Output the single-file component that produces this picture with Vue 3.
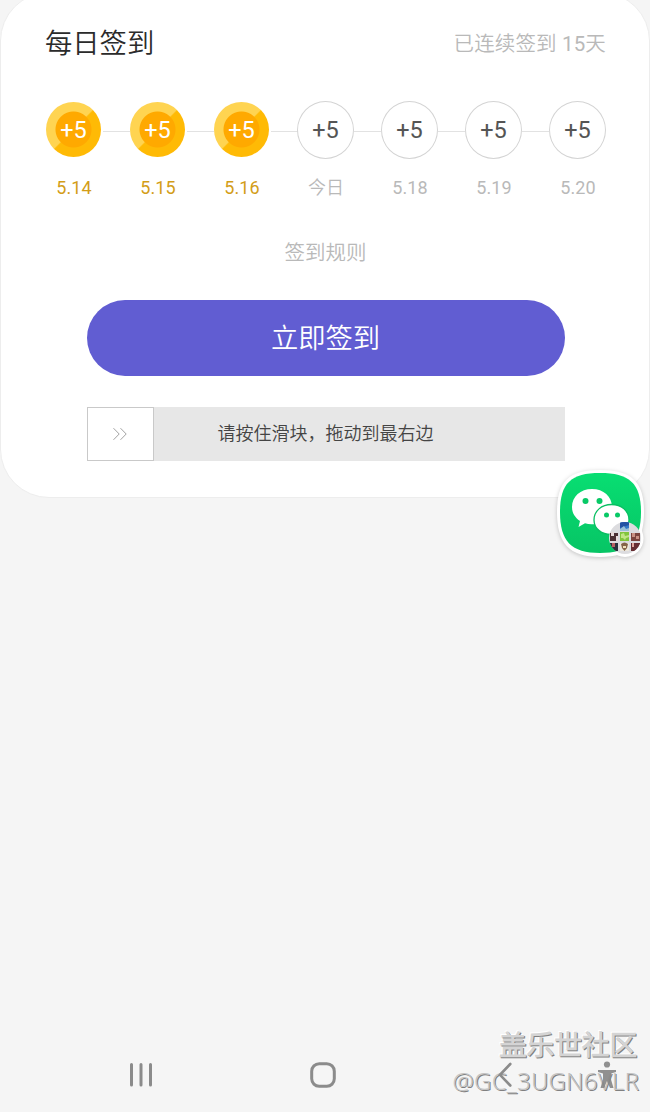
<template>
  <div class="page">
    <section class="card">
      <header class="card-header">
        <h2>每日签到</h2>
        <span class="streak">已连续签到 15天</span>
      </header>

      <ul class="days">
        <li v-for="day in days" :key="day.label" class="day" :class="{ done: day.done }">
          <div class="coin"><span>+{{ day.points }}</span></div>
          <span class="day-label">{{ day.label }}</span>
        </li>
      </ul>

      <a class="rules">签到规则</a>
      <button class="sign-btn" @click="verifying = true">立即签到</button>

      <div v-if="verifying" class="slider">
        <div class="handle">
          <svg width="16" height="14" viewBox="0 0 16 14" fill="none" stroke="#a2a2a2" stroke-width="1">
            <path d="M1.5 1.2 7.2 7 1.5 12.8M8.500 1.2 14.200 7 8.500 12.8" />
          </svg>
        </div>
        <span class="slider-text">请按住滑块，拖动到最右边</span>
      </div>
    </section>

    <!-- 悬浮应用图标 -->
    <div class="float-app">
      <svg width="94" height="94" viewBox="0 0 94 94">
        <defs>
          <linearGradient id="green" x1="0" y1="0" x2="0" y2="1">
            <stop offset="0" stop-color="#08de72" />
            <stop offset="1" stop-color="#07c565" />
          </linearGradient>
          <clipPath id="avatar"><circle cx="73" cy="72" r="16" /></clipPath>
        </defs>
        <path d="M48 4C79 4 92 15 92 46S79 91 48 91 5 77 5 46 17 4 48 4Z" fill="#fff" />
        <circle cx="73" cy="72.500" r="18.500" fill="#fff" />
        <path d="M48 7C77 7 89 17 89 46S77 87 48 87 8 75 8 46 19 7 48 7Z" fill="url(#green)" />
        <path d="M40 23C28.500 23 20 30.500 20 41C20 47 23 51.500 28 55L26.500 61L33 57.300C36 58.300 40 58.500 43 58C54 57 60 50 60 41C60 30.500 51.500 23 40 23Z" fill="#fff" />
        <circle cx="33.500" cy="35" r="3" fill="#08c966" />
        <circle cx="47.500" cy="35" r="3" fill="#08c966" />
        <path d="M59.500 38.500C49.500 38.500 42 45 42 54C42 63 50 68.500 59 68.500C62 68.500 64 68 66 67.500L72 70.500L71 65.500C75 62.500 77 58.500 77 54C77 45 69.500 38.500 59.500 38.500Z" fill="#fff" stroke="#09bf62" stroke-width="1.300" />
        <circle cx="54.500" cy="49" r="2.500" fill="#08c966" />
        <circle cx="65.500" cy="49" r="2.500" fill="#08c966" />
        <circle cx="73" cy="72" r="16" fill="#dcdcdf" />
        <!-- 九宫格群头像 -->
        <g clip-path="url(#avatar)">
          <rect x="68" y="56" width="9" height="9" fill="#3478c8" />
          <path d="M68 56h9v3l-9 3z" fill="#2451a4" />
          <path d="M68 65v-2l4-3 2 3 3-1v3z" fill="#9abfd6" />
          <rect x="58" y="67" width="8" height="8" fill="#4c3034" />
          <path d="M59 66h3v4h-3zM64 70h2v5h-2z" fill="#e8dada" />
          <rect x="68" y="66" width="9" height="9" fill="#82c53b" />
          <path d="M69 68l3-1 1 3 4-1v2l-3 1-1 2-2-2-2 0z" fill="#c2e584" />
          <rect x="79" y="67" width="9" height="8" fill="#7c443e" />
          <path d="M80 67h3v4h-3zM84 70h3v3h-3z" fill="#c99083" />
          <rect x="58" y="77" width="8" height="8" fill="#28313d" />
          <path d="M60 77h3v4h-3z" fill="#b96063" />
          <rect x="68" y="77" width="9" height="8" fill="#ece7dc" />
          <path d="M69 78q3.500-3 7 0l-1 4-2.500 3-2.500-3z" fill="#846448" />
          <path d="M71 80h3v2h-3z" fill="#f1e0bb" />
          <rect x="79" y="77" width="9" height="8" fill="#672d32" />
          <path d="M80 77h2v4h-2z" fill="#e1a79e" />
        </g>
      </svg>
    </div>

    <div class="watermark">
      <div class="wm-site">盖乐世社区</div>
      <div class="wm-user">@GC_3UGN6VLR</div>
    </div>

    <nav class="nav-bar">
      <svg width="24" height="26" viewBox="0 0 24 26" stroke="#8b8b8b" stroke-width="3" stroke-linecap="round">
        <path d="M2.500 2.500v20.500M12 2.500v20.500M21.500 2.500v20.500" />
      </svg>
      <svg width="26" height="26" viewBox="0 0 26 26" fill="none" stroke="#8b8b8b" stroke-width="3">
        <rect x="1.700" y="1.700" width="22.600" height="22.600" rx="7.500" />
      </svg>
      <svg width="14" height="26" viewBox="0 0 14 26" fill="none" stroke="#8b8b8b" stroke-width="2.600" stroke-linecap="round">
        <path d="M12.300 2 2 12.800 12.300 23.500" />
      </svg>
      <svg width="20" height="28" viewBox="0 0 20 28" fill="#858585" fill-opacity="0.9">
        <circle cx="10" cy="3.500" r="3.100" />
        <path d="M1 9h18v2l-5 1.500v6L16.500 27H13l-3-7-3 7H3.500L6 18.500v-6L1 11z" />
      </svg>
    </nav>
  </div>
</template>

<script setup>
import { ref } from 'vue'

const verifying = ref(true)

const days = ref([
  { label: '5.14', points: 5, done: true },
  { label: '5.15', points: 5, done: true },
  { label: '5.16', points: 5, done: true },
  { label: '今日', points: 5, done: false },
  { label: '5.18', points: 5, done: false },
  { label: '5.19', points: 5, done: false },
  { label: '5.20', points: 5, done: false },
])
</script>

<style>
body {
  margin: 0;
  background: #f5f5f5;
}
</style>

<style scoped>
.page {
  position: relative;
  display: flex;
  flex-direction: column;
  height: 1112px;
  overflow: hidden;
  background: #f5f5f5;
  font-family: Roboto, 'Noto Sans CJK SC DemiLight', 'Noto Sans CJK SC', sans-serif;
}

.card {
  box-sizing: border-box;
  display: flex;
  flex-direction: column;
  align-items: center;
  height: 506px;
  margin: -8px 0 0;
  padding: 30px 43px 0 44px;
  border: 1px solid #ededed;
  border-radius: 49px;
  background: #fff;
}

.card-header {
  display: flex;
  justify-content: space-between;
  align-items: flex-start;
  width: 100%;
  height: 40px;
}

h2 {
  margin: 1px 0 0;
  color: #2b2b2b;
  font-size: 27.3px;
  font-weight: 350;
  line-height: 40px;
}

.streak {
  color: #b9b9b9;
  font-size: 20.5px;
  line-height: 42px;
  letter-spacing: 0.15px;
}

.days {
  display: flex;
  justify-content: space-between;
  width: 561px;
  margin: 38px 0 0;
  padding: 0;
  list-style: none;
}

.day {
  display: flex;
  flex-direction: column;
  align-items: center;
  width: 57px;
}

.coin {
  position: relative;
  box-sizing: border-box;
  display: flex;
  align-items: center;
  justify-content: center;
  width: 57px;
  height: 58px;
  border: 1px solid #d4d4d4;
  border-radius: 50%;
  color: #555;
  font-size: 23.5px;
}

/* 与下一天的连接线 */
.day:not(:last-child) .coin::after {
  content: '';
  position: absolute;
  top: 29px;
  left: 56px;
  width: 27px;
  height: 1px;
  background: #e2e2e2;
}

.done .coin {
  width: 55px;
  height: 55px;
  margin: 1px 0 2px;
  border: none;
  background:
    radial-gradient(circle, #ffa900 17.500px, transparent 18.500px),
    linear-gradient(135deg, #ffd451 0 49%, #ffba05 51%);
  color: #fff;
}

.day.done .coin::after {
  left: 57px;
}

.day-label {
  height: 24px;
  margin-top: 17px;
  padding-left: 1px;
  color: #b9b9b9;
  font-size: 18px;
  line-height: 24px;
  letter-spacing: 0.1px;
}

.done .day-label {
  color: #d39d18;
}

.rules {
  margin-top: 38px;
  color: #b9b9b9;
  font-size: 20.5px;
  font-weight: 350;
  line-height: 30px;
}

.sign-btn {
  width: 478px;
  height: 76px;
  margin-top: 32px;
  padding: 0 0 5px;
  border: none;
  border-radius: 38px;
  background: #615dd2;
  color: #fff;
  font-family: inherit;
  font-size: 27.3px;
  font-weight: 350;
}

.slider {
  display: flex;
  width: 478px;
  height: 54px;
  margin-top: 31px;
  background: #e7e7e7;
}

.handle {
  box-sizing: border-box;
  display: flex;
  align-items: center;
  justify-content: center;
  width: 67px;
  border: 1px solid #c9c9c9;
  background: #fff;
}

.slider-text {
  margin-left: 64px;
  color: #444;
  font-size: 18px;
  font-weight: 350;
  line-height: 54px;
}

.float-app {
  position: absolute;
  top: 466px;
  left: 552px;
  filter: drop-shadow(0 1px 2px rgba(0, 0, 0, 0.2));
}

.nav-bar {
  position: relative;
  display: flex;
  align-items: center;
  height: 28px;
  margin: auto 0 23px;
  padding: 0 33px 0 129px;
}

.nav-bar svg:nth-child(2) {
  margin-left: 157px;
}

.nav-bar svg:nth-child(3) {
  margin-left: 162px;
}

.nav-bar svg:nth-child(4) {
  margin-left: 85px;
}

.watermark {
  position: absolute;
  right: 11px;
  bottom: 13px;
  display: flex;
  flex-direction: column;
  align-items: flex-end;
}

.wm-site {
  margin-right: 2px;
  color: #d4d4d4;
  font-size: 27.6px;
  font-weight: 700;
  line-height: 35px;
  text-shadow: 1px 1px 0 #808080, -1px -1px 0 #fff;
}

.wm-user {
  color: #c4c4c4;
  font-family: 'Noto Sans', 'Open Sans', sans-serif;
  font-size: 24px;
  font-weight: 300;
  line-height: 36px;
  letter-spacing: 0.2px;
  text-shadow: 1px 1px 0 #808080;
}
</style>
